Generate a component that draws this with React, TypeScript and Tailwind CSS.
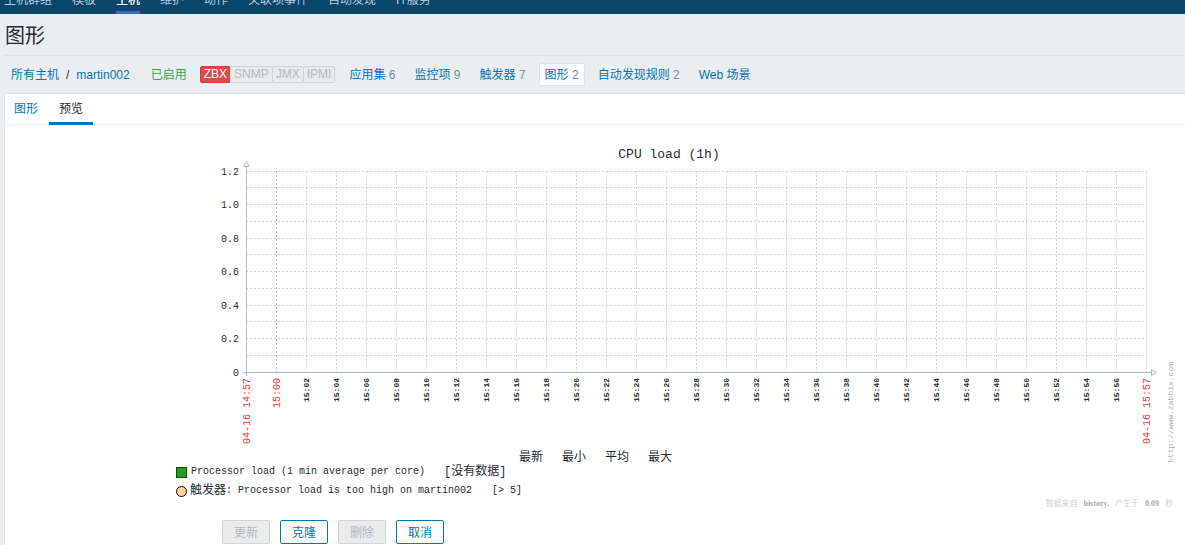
import React from "react";
import clsx from "clsx";

const menu = ["主机群组", "模板", "主机", "维护", "动作", "关联项事件", "自动发现", "IT服务"];

const interfaces = ["ZBX", "SNMP", "JMX", "IPMI"];

const hostLinks = [
    { label: "应用集", count: 6 },
    { label: "监控项", count: 9 },
    { label: "触发器", count: 7 },
    { label: "图形", count: 2, active: true },
    { label: "自动发现规则", count: 2 },
    { label: "Web 场景" },
];

const buttons = [
    { label: "更新", disabled: true },
    { label: "克隆" },
    { label: "删除", disabled: true },
    { label: "取消" },
];

// Plot area of the graph
const LEFT = 241;
const RIGHT = 1141;
const TOP = 46;
const BOTTOM = 247;
const STEP = 30;

const rows = Array.from({ length: 12 }, (_, i) => Math.floor(TOP + (i * (BOTTOM - TOP)) / 12));
const columns = Array.from({ length: 30 }, (_, i) => LEFT + STEP * (i + 1));
const yLabels = ["1.2", "1.0", "0.8", "0.6", "0.4", "0.2", "0"];
const minutes = Array.from({ length: 28 }, (_, i) => `15:${String((i + 1) * 2).padStart(2, "0")}`);

const TimeLabel = ({ x, text, main = false }: { x: number; text: string; main?: boolean }) => (
    <text
        transform={`translate(${x + (main ? 4 : 3)} 253) rotate(-90)`}
        textAnchor="end"
        className={main ? "fill-[#e33734] text-[10px]" : "fill-[#1f2c33] text-[8px] font-bold"}
    >
        {text}
    </text>
);

const Graph = () => (
    <svg
        viewBox="0 0 1160 326"
        className="block w-full font-['Liberation_Mono','Noto_Sans_CJK_SC',monospace]"
        role="img"
        aria-label="CPU load (1h)"
    >
        <text x="664" y="33" textAnchor="middle" className="fill-[#1f2c33] text-[13px]">CPU load (1h)</text>

        {/* Grid */}
        <g stroke="#ccd5d9" strokeDasharray="2 2" shapeRendering="crispEdges">
            {rows.map((y) => (
                <line key={y} x1={LEFT} x2={RIGHT} y1={y + 0.5} y2={y + 0.5} />
            ))}
            {columns.map((x, i) => (
                <line key={x} x1={x + 0.5} x2={x + 0.5} y1={TOP} y2={BOTTOM} stroke={i === 0 ? "#acbbc2" : undefined} />
            ))}
        </g>

        {/* Axes */}
        <g stroke="#acbbc2" fill="white">
            <path d={`M${LEFT + 0.5} 42V${BOTTOM + 4}M${LEFT - 3} ${BOTTOM + 0.5}H${RIGHT + 6}`} />
            <path d="M238.5 41.5h6l-3-5z" />
            <path d="M1146.5 244.5v6l5-3z" />
        </g>

        <g className="fill-[#1f2c33] text-[10px]">
            {yLabels.map((label, i) => (
                <text key={label} x="234" y={Math.floor(TOP + (i * (BOTTOM - TOP)) / 6) + 4} textAnchor="end">
                    {label}
                </text>
            ))}
        </g>

        <TimeLabel x={LEFT} text="04-16 14:57" main />
        <TimeLabel x={LEFT + STEP} text="15:00" main />
        {minutes.map((time, i) => (
            <TimeLabel key={time} x={LEFT + STEP * (i + 2)} text={time} />
        ))}
        <TimeLabel x={RIGHT} text="04-16 15:57" main />
    </svg>
);

const Legend = () => (
    <div className="pl-[171px] text-[10px] leading-[14px] text-[#1f2c33] font-['Liberation_Mono','Noto_Sans_CJK_SC',monospace]">
        <table className="w-[515px] table-fixed">
            <thead>
                <tr className="text-left text-xs leading-[14px]">
                    <td className="w-[343px] p-0"></td>
                    {["最新", "最小", "平均", "最大"].map((name) => (
                        <th key={name} scope="col" className="p-0 font-normal">{name}</th>
                    ))}
                </tr>
            </thead>
            <tbody>
                <tr>
                    <td colSpan={5} className="p-0">
                        <div className="flex h-[14px] items-center">
                            <span className="mr-1 size-[11px] border border-[#0b4a0b] bg-[#1fa01f]"></span>
                            <span>Processor load (1 min average per core)</span>
                            <span className="ml-[19px] text-xs leading-[14px]">[没有数据]</span>
                        </div>
                    </td>
                </tr>
            </tbody>
        </table>
        <div className="mt-[5px] flex h-[14px] items-center">
            <span className="mr-[3px] size-[11px] rounded-full border border-black bg-[#ffd897]"></span>
            <span className="text-xs leading-[14px]">触发器</span>
            <span className="whitespace-pre">: Processor load is too high on martin002</span>
            <span className="ml-5">[&gt; 5]</span>
        </div>
    </div>
);

const App = () => {
    return (
        <div className="flex min-h-screen flex-col bg-[#ebeef0] text-xs text-[#1f2c33] font-['Liberation_Sans','Noto_Sans_CJK_SC',sans-serif]">

            {/* Menu */}
            <nav className="flex h-[14px] items-end gap-5 overflow-hidden bg-[#0a466a] pl-1">
                {menu.map((item) => (
                    <a
                        key={item}
                        href="#"
                        className={clsx(
                            "border-b-3 pb-[3px] leading-4 whitespace-nowrap",
                            item === "主机" ? "border-[#1281c4] font-medium text-white" : "border-transparent text-[#b8cfdd]"
                        )}
                    >
                        {item}
                    </a>
                ))}
            </nav>

            <div className="ml-1 flex grow flex-col">
                <h1 className="h-[42px] border-b border-[#dfe4e7] pl-px text-xl leading-[44px]">图形</h1>

                {/* Host navigation */}
                <div className="flex min-h-[37px] flex-wrap items-center pl-[7px] leading-4 text-[#0275b8]">
                    <a href="#">所有主机</a>
                    <span className="mx-[7px] text-[#1f2c33]">/</span>
                    <a href="#">martin002</a>
                    <span className="ml-[21px] text-[#429e47]">已启用</span>
                    <div className="ml-[13px] flex">
                        {interfaces.map((name) => (
                            <span
                                key={name}
                                className={clsx(
                                    "h-[17px] rounded-xs border px-[3px] leading-[15px]",
                                    name === "ZBX"
                                        ? "border-[#d23d3d] bg-[#d64e4e] text-white"
                                        : "-ml-px border-[#ccd5d9] bg-[#ebebeb] text-[#acbbc2]"
                                )}
                            >
                                {name}
                            </span>
                        ))}
                    </div>
                    <div className="ml-2 flex gap-[7px]">
                        {hostLinks.map(({ label, count, active }) => (
                            <a
                                key={label}
                                href="#"
                                className={clsx(
                                    "h-[23px] rounded-xs border px-[5px] leading-[23px]",
                                    active ? "border-[#dfe4e7] bg-white" : "border-transparent"
                                )}
                            >
                                {label}
                                {count && <span className="text-[#768d99]"> {count}</span>}
                            </a>
                        ))}
                    </div>
                </div>

                <main className="grow border-t border-l border-[#dfe4e7] bg-white">
                    {/* Tabs */}
                    <div className="flex h-[31px] border-b border-[#ebeef0]">
                        <a href="#" className="px-[9px] leading-[30px] text-[#0275b8]">图形</a>
                        <a href="#" className="-mb-px ml-[2px] border-b-3 border-[#0275b8] px-[10px] leading-[30px]">预览</a>
                    </div>

                    <div className="flex">
                        <div className="min-w-0 grow">
                            <Graph />
                            <Legend />
                        </div>
                        <div className="flex w-5 shrink-0 items-end pb-[35px] pl-px">
                            <span className="rotate-180 text-[8px] leading-[10px] text-[#acacac] [writing-mode:vertical-rl] font-['Liberation_Mono',monospace]">
                                http://www.zabbix.com
                            </span>
                        </div>
                    </div>
                    <p className="flex justify-end gap-[6px] pr-[10px] text-[8px] leading-3 text-[#d0d0d0] font-['Liberation_Serif','Noto_Sans_CJK_SC',serif]">
                        <span>数据来自</span>
                        <b className="text-[#acacac]">history.</b>
                        <span>产生于</span>
                        <b className="text-[#acacac]">0.09</b>
                        <span>秒.</span>
                    </p>

                    {/* Form buttons */}
                    <div className="mt-[10px] flex gap-[10px] pl-[217px]">
                        {buttons.map(({ label, disabled }) => (
                            <button
                                key={label}
                                type="button"
                                disabled={disabled}
                                className="h-6 w-12 rounded-xs border border-[#0275b8] bg-white pt-px text-[#0275b8] disabled:border-[#ccd5d9] disabled:bg-[#ebebeb] disabled:text-[#acbbc2]"
                            >
                                {label}
                            </button>
                        ))}
                    </div>
                </main>
            </div>
        </div>
    );
};

export default App;
